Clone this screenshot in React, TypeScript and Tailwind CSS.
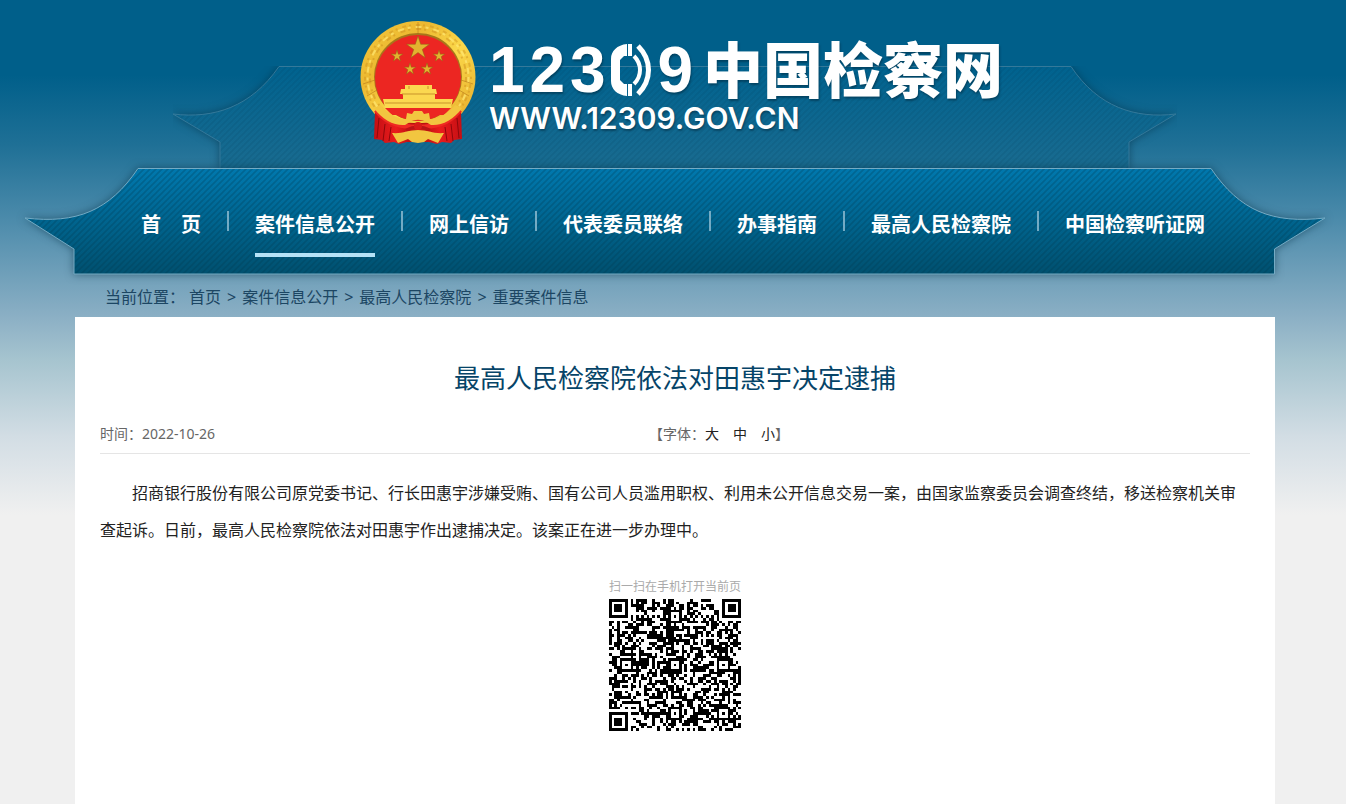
import React, { useState } from 'react';

const navItems = [
  '首　页',
  '案件信息公开',
  '网上信访',
  '代表委员联络',
  '办事指南',
  '最高人民检察院',
  '中国检察听证网',
];

const crumbs = ['首页', '案件信息公开', '最高人民检察院', '重要案件信息'];

const sizes = [
  { label: '大', cls: 'text-lg' },
  { label: '中', cls: 'text-base' },
  { label: '小', cls: 'text-sm' },
];

const starPoints = (cx: number, cy: number, r: number) =>
  Array.from({ length: 10 }, (_, i) => {
    const a = (Math.PI / 5) * i - Math.PI / 2;
    const d = i % 2 ? r * 0.38 : r;
    return `${(cx + d * Math.cos(a)).toFixed(1)},${(cy + d * Math.sin(a)).toFixed(1)}`;
  }).join(' ');

const Emblem: React.FC = () => (
  <svg viewBox="0 0 118 124" className="h-[124px] w-[118px] shrink-0" role="img" aria-label="国徽">
    <defs>
      <linearGradient id="gold" x1="0" y1="0" x2="1" y2="1">
        <stop offset="0" stopColor="#f3c93d" />
        <stop offset="0.3" stopColor="#ecb830" />
        <stop offset="0.55" stopColor="#fbd84a" />
        <stop offset="1" stopColor="#e3a526" />
      </linearGradient>
      <linearGradient id="drape" x1="0" y1="0" x2="1" y2="0">
        <stop offset="0" stopColor="#c40f14" />
        <stop offset="0.25" stopColor="#ea1c1c" />
        <stop offset="0.5" stopColor="#a80b0e" />
        <stop offset="0.75" stopColor="#ea1c1c" />
        <stop offset="1" stopColor="#c40f14" />
      </linearGradient>
    </defs>
    <ellipse cx="59" cy="57" rx="57.5" ry="56" fill="url(#gold)" />
    <ellipse cx="59" cy="57" rx="53" ry="52" fill="none" stroke="#c98a1c" strokeWidth="2" strokeDasharray="2 5 4 3" opacity="0.4" />
    <ellipse cx="59" cy="57" rx="48" ry="48" fill="none" stroke="#c98a1c" strokeWidth="2" strokeDasharray="5 3 2 6" opacity="0.45" />
    <ellipse cx="59" cy="57" rx="50.5" ry="50" fill="none" stroke="#ffe774" strokeWidth="2" strokeDasharray="6 4 3 5" opacity="0.7" />
    <path d="M59 2v12M4 64l12-4M8 76l10-6M114 64l-12-4M110 76l-10-6" stroke="#c08420" strokeWidth="1" opacity="0.7" />
    <circle cx="59" cy="57" r="44" fill="#a8761a" />
    <circle cx="59" cy="58" r="43" fill="#ec2622" />
    <g fill="#e3b32f" stroke="#8c6414" strokeWidth="0.5">
      <polygon points={starPoints(59, 28, 12)} />
      <polygon points={starPoints(38, 36, 6)} />
      <polygon points={starPoints(80, 36, 6)} />
      <polygon points={starPoints(51, 49, 6)} />
      <polygon points={starPoints(68, 49, 6)} />
    </g>
    <path d="M46 65h27v4h-27zM42 69h35l1 5H41zM44 74h32v5H44zM24 79h70l-2 9H26z" fill="#fbd850" />
    <path d="M43 74h33M26 83h66M50 69v-3M69 69v-3" stroke="#c9932a" strokeWidth="1" />
    <path d="M26 88h66l-7 7H33z" fill="#ec2622" />
    <path d="M16 91c10 5 18 12 43 12s33-7 43-12l1 28-8 1-3 3-9-1-5 2-8-2H48l-8 2-5-2-9 1-3-3-8-1z" fill="url(#drape)" />
    <path d="M17 90c12 14 25 17 42 17s30-3 42-17" fill="none" stroke="#ef2a22" strokeWidth="5" />
    <path d="M20 98l-2 20M26 104l-2 17M32 107l-2 14M98 98l2 20M92 104l2 17M86 107l2 14" stroke="#8e080b" strokeWidth="1" />
    <path d="M22 85c8 10 20 15 25 14l1-6 5 1 2-3h8l2 3 5-1 1 6c5 1 17-4 25-14l7 3c-8 12-21 18-31 17l-5-3c-3-3-13-3-16 0l-5 3c-10 1-23-5-31-17z" fill="#f2c640" />
    <path d="M33 113c10 1 16-3 26-3s16 4 26 3l-6 10-10-4-4 3-6 1-6-1-4-3-10 4z" fill="#f2c640" />
    <path d="M47 110c8-4 16-4 24 0" fill="none" stroke="#b91415" strokeWidth="3" />
    <circle cx="59" cy="106" r="4" fill="#d71a18" />
  </svg>
);

// telephone receiver with sound waves, stands for the zero in 12309
const PhoneZero: React.FC = () => (
  <svg viewBox="0 0 42 52" className="h-[52px] w-[42px]" fill="none" aria-hidden="true">
    <path d="M16 0v12h-3l-4 4v20l4 4h3v12C6 51 0 45 0 37V15C0 7 6 1 16 0z" fill="#fff" />
    <path d="M19 0v12M19 40v12" stroke="#fff" strokeWidth="4" />
    <path d="M23 12c8 8 8 20 0 28" stroke="#fff" strokeWidth="4" />
    <path d="M27 2c14 14 14 34 0 48" stroke="#fff" strokeWidth="5" />
  </svg>
);

interface RoofProps {
  id: string;
  top: string;
  bottom: string;
  stroke: string;
  lineOpacity: number;
  d: string;
  width: number;
  height: number;
}

const Roof: React.FC<RoofProps> = ({ id, top, bottom, stroke, lineOpacity, d, width, height }) => (
  <svg
    viewBox={`0 0 ${width} ${height}`}
    preserveAspectRatio="none"
    className="absolute inset-0 h-full w-full overflow-visible drop-shadow-[0_0_4px_rgba(0,40,60,0.5)]"
    aria-hidden="true"
  >
    <defs>
      <linearGradient id={`${id}-fill`} x1="0" y1="0" x2="0" y2="1">
        <stop offset="0" stopColor={top} />
        <stop offset="1" stopColor={bottom} />
      </linearGradient>
      <pattern id={`${id}-lines`} width="6" height="6" patternUnits="userSpaceOnUse">
        <path d="M-1 1l2-2M0 6l6-6M5 7l2-2" stroke="#00384f" strokeWidth="1.6" opacity={lineOpacity} />
      </pattern>
    </defs>
    <path d={d} fill={`url(#${id}-fill)`} />
    <path d={d} fill={`url(#${id}-lines)`} stroke={stroke} strokeWidth="1" />
  </svg>
);

const QR_SIZE = 49;

const isFinder = (x: number, y: number) => {
  const fx = x > QR_SIZE - 9 ? QR_SIZE - 1 - x : x;
  const fy = y > QR_SIZE - 9 ? QR_SIZE - 1 - y : y;
  if (fx > 7 || fy > 7 || (x > 40 && y > 40)) return null;
  if (fx === 7 || fy === 7) return false;
  const ring = Math.max(Math.abs(fx - 3), Math.abs(fy - 3));
  return ring !== 2;
};

const alignCenters = [
  [24, 6],
  [6, 24],
  [24, 24],
  [42, 24],
  [24, 42],
  [42, 42],
];

const buildQr = () => {
  let seed = 12309;
  let path = '';
  for (let y = 0; y < QR_SIZE; y++) {
    for (let x = 0; x < QR_SIZE; x++) {
      seed = (seed * 1103515245 + 12345) % 2147483648;
      let dark = seed / 2147483648 < 0.52;
      if (x === 6 || y === 6) dark = (x + y) % 2 === 0;
      const align = alignCenters.find(([cx, cy]) => Math.abs(cx - x) < 3 && Math.abs(cy - y) < 3);
      if (align) dark = Math.max(Math.abs(align[0] - x), Math.abs(align[1] - y)) !== 1;
      const finder = isFinder(x, y);
      if (finder !== null) dark = finder;
      if (dark) path += `M${x} ${y}h1v1h-1z`;
    }
  }
  return path;
};

const qrPath = buildQr();

const Header: React.FC = () => (
  <header>
    <div className="relative mx-auto flex h-[168px] max-w-[1300px] justify-center">
      <div className="absolute inset-x-[148px] bottom-0 top-[66px] overflow-hidden">
        <Roof
          id="upper"
          width={1004}
          height={102}
          top="#00628f"
          bottom="#1a6b90"
          stroke="#34799a"
          lineOpacity={0.12}
          d="M106 .5H898C925 41 962 53 1003 48L956 76V103H47V76L0 48C41 53 78 41 106 .5z"
        />
      </div>
      <a href="#" className="relative ml-3 mt-5 flex h-[126px] gap-3 text-white [text-shadow:1px_2px_2px_rgba(0,40,60,0.5)]">
        <Emblem />
        <div>
          <div className="mt-5 flex h-[60px] items-center font-bold">
            <span className="flex w-[214px] items-center justify-between pr-2.5 font-['Liberation_Sans',sans-serif] text-[64px] leading-[60px]">
              <span>1</span>
              <span>2</span>
              <span>3</span>
              <PhoneZero />
              <span>9</span>
            </span>
            <span className="text-[60px] font-black leading-[60px]">中国检察网</span>
          </div>
          <div className="font-['Inter',sans-serif] text-[30px] font-semibold leading-9">WWW.12309.GOV.CN</div>
        </div>
      </a>
    </div>

    <nav className="relative mx-auto h-[107px] max-w-[1300px]">
      <Roof
        id="lower"
        width={1300}
        height={107}
        top="#0078ae"
        bottom="#00506f"
        stroke="#74abc4"
        lineOpacity={0.28}
        d="M113 .5H1186C1215 43 1247 56 1300 50L1249.5 81V106H49V81L0 50C52 56 84 43 113 .5z"
      />
      <ul className="relative flex justify-center pr-1 pt-10 text-xl font-bold leading-[34px] text-white">
        {navItems.map((item, i) => (
          <li key={item} className="flex items-start">
            {i > 0 && <span className="mx-[26px] mt-[3px] h-5 w-0.5 bg-[#74abc4]" />}
            <a
              href="#"
              className={
                i === 1
                  ? 'block h-[49px] border-b-4 border-[#b5e2f7]'
                  : 'block h-[49px] border-b-4 border-transparent hover:border-[#b5e2f7]'
              }
            >
              {item}
            </a>
          </li>
        ))}
      </ul>
    </nav>
  </header>
);

const App: React.FC = () => {
  const [fontSize, setFontSize] = useState('text-base');

  return (
    <div className="flex min-h-screen flex-col overflow-hidden bg-[#f0f0f0] bg-[linear-gradient(180deg,#005f8a_0px,#005f8a_75px,#1f7096_145px,#4c8bab_220px,#8cb0c5_318px,#a6c4cf_360px,#d2dde4_436px,#f0f0f0_515px)] pl-1 font-['Noto_Sans','Noto_Sans_CJK_SC',sans-serif]">
      <Header />

      <div className="mx-auto flex w-full max-w-[1200px] grow flex-col">
        <div className="flex h-[42px] items-center gap-1.5 pl-[30px] pt-0.5 text-base text-[#1c4663]">
          <span className="-mr-0.5">当前位置：</span>
          {crumbs.map((crumb, i) => (
            <React.Fragment key={crumb}>
              {i > 0 && <span>&gt;</span>}
              <a href="#">{crumb}</a>
            </React.Fragment>
          ))}
        </div>

        <main className="grow bg-white px-[25px] pt-10">
          <h1 className="text-center text-[26px] leading-[42px] text-[#064468]">最高人民检察院依法对田惠宇决定逮捕</h1>
          <div className="mt-4 flex h-[39px] items-center border-b border-[#e5e5e5] text-sm text-[#666]">
            <span className="w-[549px]">时间：2022-10-26</span>
            <div className="flex">
              <span>【字体：</span>
              <span className="flex gap-3.5 text-[#222]">
                {sizes.map((size) => (
                  <button key={size.label} type="button" onClick={() => setFontSize(size.cls)}>
                    {size.label}
                  </button>
                ))}
              </span>
              <span>】</span>
            </div>
          </div>

          <article className={fontSize}>
            <p className="mt-[21px] indent-8 leading-[37px] text-[#222]">
              招商银行股份有限公司原党委书记、行长田惠宇涉嫌受贿、国有公司人员滥用职权、利用未公开信息交易一案，由国家监察委员会调查终结，移送检察机关审查起诉。日前，最高人民检察院依法对田惠宇作出逮捕决定。该案正在进一步办理中。
            </p>
          </article>

          <div className="mt-7 flex flex-col items-center gap-0.5">
            <p className="text-xs leading-5 text-[#aaa]">扫一扫在手机打开当前页</p>
            <svg viewBox="0 0 49 49" className="size-[132px]" shapeRendering="crispEdges" role="img" aria-label="二维码">
              <path d={qrPath} fill="#000" />
            </svg>
          </div>
        </main>
      </div>
    </div>
  );
};

export default App;
